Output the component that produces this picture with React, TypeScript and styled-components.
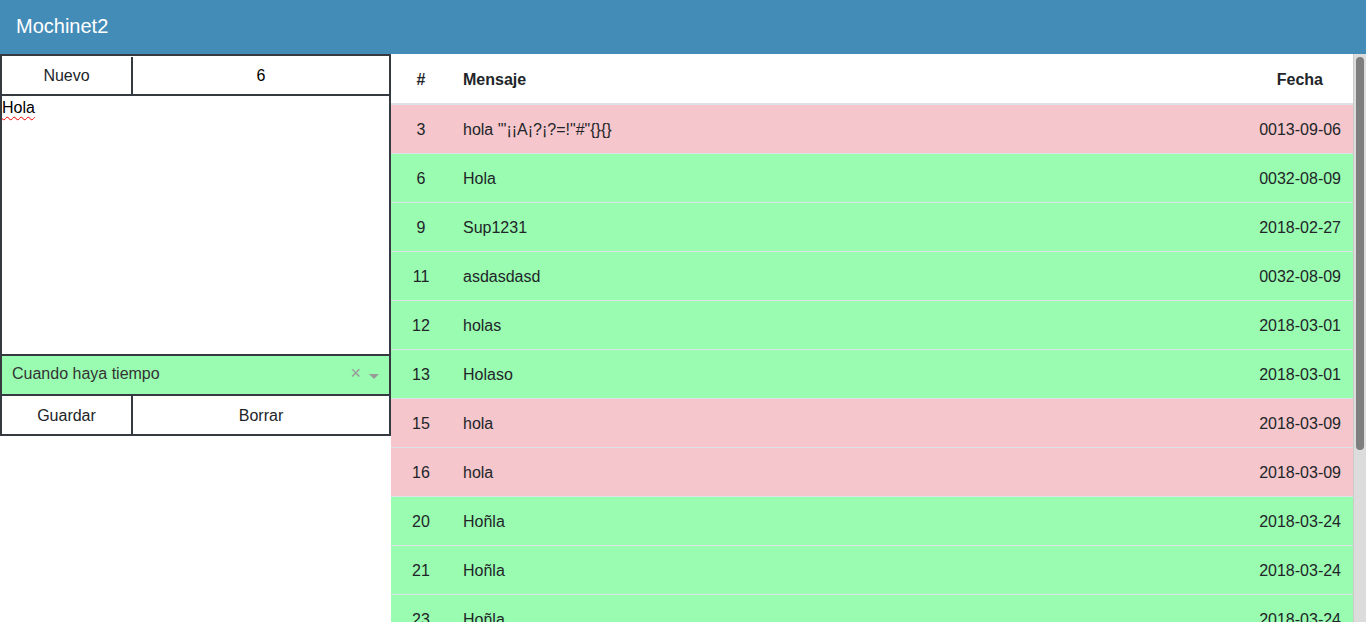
import React from "react";
import styled, { createGlobalStyle } from "styled-components";

const Global = createGlobalStyle`
  html, body { margin: 0; padding: 0; height: 100%; overflow: hidden; }
  body { font-family: "Liberation Sans", Arial, sans-serif; color: #212529; font-size: 16px; }
  #root { height: 100%; }
  * { box-sizing: border-box; }
`;

const Page = styled.div`
  height: 100vh;
  display: flex;
  flex-direction: column;
`;

const TopBar = styled.header`
  height: 54px;
  flex: none;
  background: #448cb8;
  color: #fff;
  display: flex;
  align-items: center;
  padding-left: 16px;
  font-size: 20px;
  padding-bottom: 2px;
`;

const Main = styled.div`
  flex: 1;
  min-height: 0;
  display: flex;
`;

const Side = styled.aside`
  width: 391px;
  flex: none;
  align-self: flex-start;
  border: 2px solid #343a40;
  display: flex;
  flex-direction: column;
`;

const Row = styled.div`
  display: grid;
  grid-template-columns: 129px 1fr;
  height: 38px;
  padding-top: 1px;
`;

const Cell = styled.div<{ $dark?: boolean }>`
  display: flex;
  align-items: center;
  justify-content: center;
  color: ${(p) => (p.$dark ? "#000" : "#212529")};
  & + & { border-left: 2px solid #343a40; }
`;

const Btn = styled.button`
  border: none;
  background: #fff;
  font: inherit;
  color: #212529;
  padding: 2px 0 0 0;
  & + & { border-left: 2px solid #343a40; }
`;

const Area = styled.textarea`
  display: block;
  height: 262px;
  border: none;
  border-top: 2px solid #343a40;
  border-bottom: 2px solid #343a40;
  resize: none;
  padding: 3px 0 0 0;
  margin: 0;
  font-family: "Liberation Sans", Arial, sans-serif;
  font-size: 16px;
  color: #000;
  outline: none;
  text-decoration: underline wavy #e00;
  text-decoration-thickness: 1px;
  text-underline-offset: 3px;
`;

const SelectBox = styled.div`
  height: 40px;
  background: #99fcb0;
  display: flex;
  align-items: center;
  padding: 0 10px 3px 10px;
  color: #333;
  border-bottom: 2px solid #343a40;
`;

const SelectText = styled.span`
  flex: 1;
`;

const Clear = styled.span`
  color: #999;
  font-size: 18px;
  margin-right: 8px;
`;

const Caret = styled.span`
  width: 0;
  height: 0;
  border-left: 5px solid transparent;
  border-right: 5px solid transparent;
  border-top: 5px solid #999;
  margin-top: 5px;
`;

const ButtonRow = styled.div`
  display: grid;
  grid-template-columns: 129px 1fr;
  height: 38px;
`;

const Right = styled.section`
  flex: 1;
  min-width: 0;
  display: flex;
`;

const Scroller = styled.div`
  flex: 1;
  min-width: 0;
  overflow: hidden;
`;

const ScrollTrack = styled.div`
  width: 13px;
  flex: none;
  background: #dcdcdc;
  border-left: 1px solid #cacaca;
  padding: 3px 2px 0 2px;
`;

const ScrollThumb = styled.div`
  height: 393px;
  background: #7e7e7e;
  border-radius: 4px;
`;

const Table = styled.table`
  width: 100%;
  border-collapse: collapse;
  font-size: 16px;
`;

const Th = styled.th<{ $align?: string; $pr?: number }>`
  padding: 14px 12px 11px 12px;
  padding-right: ${(p) => p.$pr ?? 12}px;
  line-height: 24px;
  text-align: ${(p) => p.$align || "left"};
  border-bottom: 2px solid #dee2e6;
  font-weight: bold;
  background: #fff;
`;

const Tr = styled.tr<{ $bad?: boolean }>`
  background: ${(p) => (p.$bad ? "#f5c6cb" : "#99fcb0")};
`;

const Td = styled.td<{ $align?: string }>`
  padding: 13px 12px 12px 12px;
  line-height: 23px;
  border-top: 1px solid #dee2e6;
  text-align: ${(p) => p.$align || "left"};
`;

const rows = [
  { id: 3, msg: "hola '\"¡¡A¡?¡?=!\"#\"{}{}", date: "0013-09-06", bad: true },
  { id: 6, msg: "Hola", date: "0032-08-09" },
  { id: 9, msg: "Sup1231", date: "2018-02-27" },
  { id: 11, msg: "asdasdasd", date: "0032-08-09" },
  { id: 12, msg: "holas", date: "2018-03-01" },
  { id: 13, msg: "Holaso", date: "2018-03-01" },
  { id: 15, msg: "hola", date: "2018-03-09", bad: true },
  { id: 16, msg: "hola", date: "2018-03-09", bad: true },
  { id: 20, msg: "Hoñla", date: "2018-03-24" },
  { id: 21, msg: "Hoñla", date: "2018-03-24" },
  { id: 23, msg: "Hoñla", date: "2018-03-24" },
];

export default function App() {
  return (
    <Page>
      <Global />
      <TopBar>Mochinet2</TopBar>
      <Main>
        <Side>
          <Row>
            <Cell>Nuevo</Cell>
            <Cell $dark>6</Cell>
          </Row>
          <Area defaultValue="Hola" spellCheck={false} />
          <SelectBox>
            <SelectText>Cuando haya tiempo</SelectText>
            <Clear>×</Clear>
            <Caret />
          </SelectBox>
          <ButtonRow>
            <Btn>Guardar</Btn>
            <Btn>Borrar</Btn>
          </ButtonRow>
        </Side>
        <Right>
          <Scroller>
            <Table>
              <colgroup>
                <col style={{ width: 60 }} />
                <col />
                <col style={{ width: 140 }} />
              </colgroup>
              <thead>
                <tr>
                  <Th $align="center">#</Th>
                  <Th>Mensaje</Th>
                  <Th $align="right" $pr={30}>Fecha</Th>
                </tr>
              </thead>
              <tbody>
                {rows.map((r) => (
                  <Tr key={r.id} $bad={r.bad}>
                    <Td $align="center">{r.id}</Td>
                    <Td>{r.msg}</Td>
                    <Td $align="right">{r.date}</Td>
                  </Tr>
                ))}
              </tbody>
            </Table>
          </Scroller>
          <ScrollTrack>
            <ScrollThumb />
          </ScrollTrack>
        </Right>
      </Main>
    </Page>
  );
}
